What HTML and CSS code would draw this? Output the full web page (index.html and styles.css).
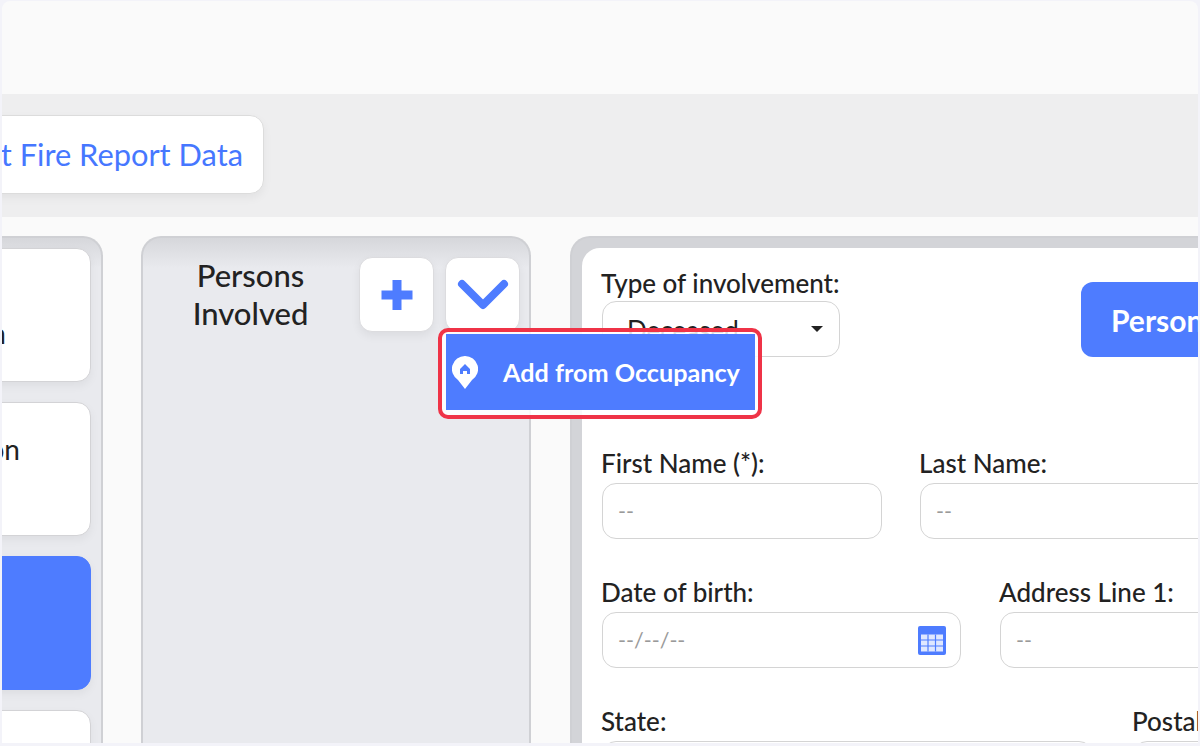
FILE: index.html
```html
<!DOCTYPE html>
<html lang="en">
<head>
  <meta charset="UTF-8" />
  <meta name="viewport" content="width=device-width, initial-scale=1.0"/>
  <title>Persons Involved</title>
  <link rel="stylesheet" href="styles.css">
</head>
<body>
  <div class="frame">
    <div class="topbar"></div>

    <div class="toolbar">
      <button class="export-btn">Import Fire Report Data</button>
    </div>

    <div class="content">
      <div class="panel sections">
        <div class="section-card"><span class="text-one">Incident Location</span></div>
        <div class="section-card"><span class="text-two">Fire Origin Location</span></div>
        <div class="section-card active"></div>
        <div class="section-card"></div>
      </div>

      <div class="panel persons">
        <div class="persons-head">
          <h2>Persons Involved</h2>
          <button class="icon-btn" aria-label="Add">
            <svg width="34" height="32" viewBox="0 0 34 32"><path d="M17 1v30M1.500 16h31" fill="none" stroke="#4e7cff" stroke-width="9"/></svg>
          </button>
          <button class="icon-btn" aria-label="More">
            <svg width="52" height="32" viewBox="0 0 52 32"><path d="M5 5l21 21L47 5" fill="none" stroke="#4e7cff" stroke-width="8" stroke-linecap="round" stroke-linejoin="round"/></svg>
          </button>
        </div>
      </div>

      <div class="panel details">
        <div class="details-inner">
          <div class="form-row first-row">
            <div class="field type-field">
              <label>Type of involvement:</label>
              <div class="select-box">Deceased<span class="caret"></span></div>
            </div>
            <button class="person-btn">Person Details</button>
          </div>

          <div class="form-row row-name">
            <div class="field w-280">
              <label>First Name (*):</label>
              <input type="text" placeholder="--">
            </div>
            <div class="field w-300">
              <label>Last Name:</label>
              <input type="text" placeholder="--">
            </div>
          </div>

          <div class="form-row row-birth">
            <div class="field w-359">
              <label>Date of birth:</label>
              <div class="date-box">
                <input type="text" placeholder="--/--/--">
                <svg width="30" height="30" viewBox="0 0 30 30">
                  <rect x="1" y="1" width="28" height="29" rx="2" fill="#4e7cff"/>
                  <path d="M4 9.500h22v17H4z" fill="#dfe7ff"/>
                  <path d="M4 15h22M4 21h22M11 9.500v17M18.500 9.500v17" stroke="#4e7cff" stroke-width="1.200"/>
                </svg>
              </div>
            </div>
            <div class="field w-300">
              <label>Address Line 1:</label>
              <input type="text" placeholder="--">
            </div>
          </div>

          <div class="form-row row-state">
            <div class="field w-491">
              <label>State:</label>
              <input type="text">
            </div>
            <div class="field w-300">
              <label>Postal Code:</label>
              <input type="text">
            </div>
          </div>
        </div>
      </div>
    </div>

    <!-- highlighted dropdown -->
    <div class="highlight">
      <div class="menu-item">
        <svg width="26" height="33" viewBox="0 0 26 33">
          <path d="M13 0a13 13 0 0 1 7 24l-7 9-7-9A13 13 0 0 1 13 0z" fill="#fff"/>
          <path d="M13 8l5 5v5h-3v-3h-4v3H8v-5z" fill="#4e7cff"/>
        </svg>
        <span>Add from Occupancy</span>
      </div>
    </div>
  </div>
</body>
</html>
```

FILE: styles.css
```css
* { box-sizing: border-box; margin: 0; padding: 0; }

body {
  height: 746px;
  overflow: hidden;
  background: #f3f3f9;
  font-family: 'Lato', sans-serif;
  color: #222;
}

.frame {
  position: relative;
  margin: 1px 2px 0;
  height: 742px;
  overflow: hidden;
  background: #fafafa;
  border-radius: 8px 8px 0 0;
}

.topbar { height: 93px; }

.toolbar {
  height: 123px;
  padding-top: 21px;
  background: #eeeeef;
}

.export-btn {
  display: block;
  width: 382px;
  height: 79px;
  margin-left: -120px;
  padding-right: 20px;
  text-align: right;
  white-space: nowrap;
  background: #fff;
  border: 1px solid #dcdcdc;
  border-radius: 14px;
  box-shadow: 0 4px 10px rgba(0,0,0,0.05);
  font-family: inherit;
  font-size: 30.800px;
  color: #4677ff;
}

.content {
  display: flex;
  gap: 38px;
  margin-left: -199px;
  padding-top: 19px;
}

.panel {
  flex: none;
  height: 560px;
  border: 2px solid #cfd0d4;
  border-bottom: none;
  border-radius: 20px 20px 0 0;
  background: linear-gradient(#d6d7db, #e9eaee 30px);
}

.sections {
  width: 300px;
  padding: 10px 10px 0 0;
  display: flex;
  flex-direction: column;
  gap: 20px;
}

.section-card {
  flex: none;
  height: 134px;
  display: flex;
  align-items: center;
  justify-content: flex-end;
  background: #fff;
  border: 1px solid #d3d3d6;
  border-radius: 14px;
  box-shadow: 0 4px 10px rgba(0,0,0,0.05);
  font-size: 28px;
  white-space: nowrap;
}

.section-card.active {
  background: #4e7cff;
  border-color: #4e7cff;
}

.text-one { margin: 35px 84px 0 0; }
.text-two { margin: 0 70px 41px 0; }

.persons { width: 390px; }

.persons-head {
  display: flex;
  gap: 11px;
  padding: 19px 9px 0 0;
}

.persons-head h2 {
  flex: 1;
  margin-top: -1px;
  padding-left: 10px;
  font-size: 31px;
  font-weight: 500;
  line-height: 38px;
  text-align: center;
  color: #222;
}

.icon-btn {
  display: flex;
  flex: none;
  align-items: center;
  justify-content: center;
  width: 75px;
  height: 75px;
  background: #fff;
  border: 1px solid #dcdcdf;
  border-radius: 13px;
  box-shadow: 0 4px 10px rgba(0,0,0,0.06);
}

.details {
  width: 700px;
  margin-left: 1px;
  padding: 10px 0 0 10px;
  background: linear-gradient(#d3d4d8, #d3d4d8);
}

.details-inner {
  height: 100%;
  padding: 21px 0 0 20px;
  background: #fff;
  border-radius: 18px 0 0 0;
}

.form-row {
  display: flex;
  align-items: flex-end;
}

.field label {
  display: block;
  height: 28px;
  margin: 0 0 6px -1px;
  font-size: 26px;
  font-weight: 500;
  line-height: 28px;
  white-space: nowrap;
  color: #222;
}

.field input {
  display: block;
  width: 100%;
  height: 56px;
  padding: 0 15px;
  background: #fff;
  border: 1px solid #d4d4d4;
  border-radius: 14px;
  font-family: inherit;
  font-size: 21.500px;
}

.field input::placeholder { color: #9a9a9a; }

.first-row { height: 88px; }
.type-field { flex: none; width: 238px; }
.type-field label { margin-bottom: 4px; }

.select-box {
  position: relative;
  height: 56px;
  padding: 13px 0 0 24px;
  background: #fff;
  border: 1px solid #d4d4d4;
  border-radius: 14px;
  font-size: 26px;
  line-height: 30px;
}

.caret {
  position: absolute;
  top: 24px;
  right: 16px;
  border-left: 6px solid transparent;
  border-right: 6px solid transparent;
  border-top: 6px solid #222;
}

.person-btn {
  flex: none;
  width: 300px;
  height: 75px;
  margin-left: 241px;
  padding-left: 30px;
  text-align: left;
  white-space: nowrap;
  background: #4e7cff;
  border: none;
  border-radius: 12px;
  font-family: inherit;
  font-size: 30px;
  font-weight: 700;
  color: #fff;
}

.row-name { margin-top: 92px; gap: 38px; }
.row-birth { margin-top: 39px; gap: 39px; }
.row-state { margin-top: 39px; gap: 40px; }

.w-280 { width: 280px; flex: none; }
.w-300 { width: 300px; flex: none; }
.w-359 { width: 359px; flex: none; }
.w-491 { width: 491px; flex: none; }

.date-box {
  display: flex;
  align-items: center;
  height: 56px;
  padding-right: 13px;
  background: #fff;
  border: 1px solid #d4d4d4;
  border-radius: 14px;
}

.date-box input {
  flex: 1;
  height: 50px;
  border: none;
}

.highlight {
  position: absolute;
  left: 436px;
  top: 327px;
  width: 324px;
  height: 91px;
  padding: 2px 3px 5px 4px;
  background: rgba(255,255,255,0.85);
  border: 4px solid #ef3347;
  border-radius: 10px;
}

.menu-item {
  display: flex;
  align-items: center;
  gap: 25px;
  height: 76px;
  padding-left: 6px;
  background: #4e7cff;
  font-size: 25.200px;
  font-weight: 700;
  white-space: nowrap;
  color: #fff;
}
```
